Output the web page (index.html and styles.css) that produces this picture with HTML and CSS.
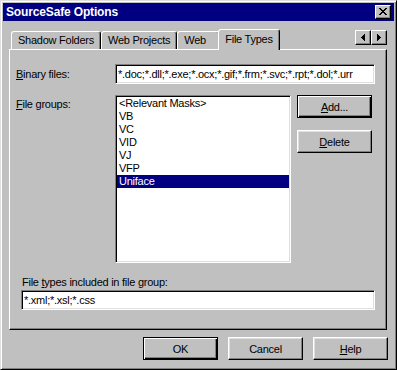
FILE: index.html
```html
<!DOCTYPE html>
<html lang="en">
<head>
    <meta charset="UTF-8">
    <title>SourceSafe Options</title>
    <link rel="stylesheet" href="styles.css">
</head>
<body>
    <div class="window">
        <div class="titlebar">
            <span class="title">SourceSafe Options</span>
            <span class="close-btn">
                <svg width="8" height="7" viewBox="0 0 8 7" shape-rendering="crispEdges">
                    <path d="M0 0h2v1h-2z M6 0h2v1h-2z M1 1h2v1h-2z M5 1h2v1h-2z M2 2h4v1h-4z M3 3h2v1h-2z M2 4h4v1h-4z M1 5h2v1h-2z M5 5h2v1h-2z M0 6h2v1h-2z M6 6h2v1h-2z" fill="#000"/>
                </svg>
            </span>
        </div>

        <div class="dialog">
            <div class="tabs">
                <div class="tab">Shadow Folders</div>
                <div class="tab">Web Projects</div>
                <div class="tab web">Web</div>
                <div class="tab active">File Types</div>
                <div class="tab-scroll">
                    <span class="arrow-btn">
                        <svg width="4" height="7" viewBox="0 0 4 7" shape-rendering="crispEdges">
                            <path d="M3 0h1v7h-1z M2 1h1v5h-1z M1 2h1v3h-1z M0 3h1v1h-1z" fill="#000"/>
                        </svg>
                    </span>
                    <span class="arrow-btn">
                        <svg width="4" height="7" viewBox="0 0 4 7" shape-rendering="crispEdges">
                            <path d="M0 0h1v7h-1z M1 1h1v5h-1z M2 2h1v3h-1z M3 3h1v1h-1z" fill="#000"/>
                        </svg>
                    </span>
                </div>
            </div>

            <div class="panel">
                <div class="field-row">
                    <label><u>B</u>inary files:</label>
                    <div class="textbox">*.doc;*.dll;*.exe;*.ocx;*.gif;*.frm;*.svc;*.rpt;*.dol;*.urr</div>
                </div>

                <div class="groups-row">
                    <label class="groups-label"><u>F</u>ile groups:</label>
                    <ul class="listbox">
                        <li>&lt;Relevant Masks&gt;</li>
                        <li>VB</li>
                        <li>VC</li>
                        <li>VID</li>
                        <li>VJ</li>
                        <li>VFP</li>
                        <li class="selected">Uniface</li>
                    </ul>
                    <div class="side-buttons">
                        <button class="btn default"><u>A</u>dd...</button>
                        <button class="btn"><u>D</u>elete</button>
                    </div>
                </div>

                <div class="types">
                    <label>File <u>t</u>ypes included in file group:</label>
                    <div class="textbox">*.xml;*.xsl;*.css</div>
                </div>
            </div>

            <div class="actions">
                <button class="btn default">OK</button>
                <button class="btn">Cancel</button>
                <button class="btn"><u>H</u>elp</button>
            </div>
        </div>
    </div>
</body>
</html>
```

FILE: styles.css
```css
:root {
    --face: #c0c0c0;
    --shadow: #808080;
    --light: #dfdfdf;
    --navy: #000080;
}

* {
    box-sizing: border-box;
    margin: 0;
    padding: 0;
}

body {
    font-family: 'Liberation Sans', Arial, sans-serif;
    font-size: 11px;
    letter-spacing: -0.25px;
    color: #000;
    background: var(--face);
}

.window {
    width: 397px;
    height: 370px;
    background: var(--face);
    border: 1px solid;
    border-color: var(--light) #000 #000 var(--light);
    box-shadow: inset 1px 1px 0 #fff, inset -1px -1px 0 var(--shadow);
    padding: 2px;
}

/* title bar */
.titlebar {
    height: 18px;
    background: var(--navy);
    display: flex;
    align-items: center;
    justify-content: space-between;
    padding: 0 3px 0 3px;
}

.title {
    color: #fff;
    font-weight: bold;
    font-size: 12px;
    letter-spacing: -0.15px;
}

.close-btn {
    width: 16px;
    height: 14px;
    background: var(--face);
    border: 1px solid;
    border-color: #fff #000 #000 #fff;
    box-shadow: inset -1px -1px 0 var(--shadow);
    display: flex;
    align-items: center;
    justify-content: center;
    padding: 0 1px 1px 0;
}

/* dialog body */
.dialog {
    padding: 8px 7px 0 6px;
}

.tabs {
    display: flex;
    align-items: flex-end;
    height: 20px;
    padding-left: 2px;
}

.tab {
    height: 18px;
    padding: 0 6px;
    border: 1px solid;
    border-bottom: none;
    border-color: #fff #000 transparent #fff;
    border-radius: 3px 3px 0 0;
    box-shadow: inset -1px 0 0 var(--shadow);
    line-height: 16px;
    white-space: nowrap;
}

.tab.web {
    min-width: 43px;
}

.tab.active {
    height: 21px;
    margin: 0 -2px -1px;
    padding: 1px 6px 0;
    position: relative;
    z-index: 1;
    background: var(--face);
}

.tab-scroll {
    margin-left: auto;
    align-self: flex-start;
    margin-top: 1px;
    display: flex;
}

.arrow-btn {
    width: 16px;
    height: 15px;
    background: var(--face);
    border: 1px solid;
    border-color: #fff #000 #000 #fff;
    box-shadow: inset -1px -1px 0 var(--shadow);
    display: flex;
    align-items: center;
    justify-content: center;
}

.panel {
    height: 281px;
    border: 1px solid;
    border-color: #fff #000 #000 #fff;
    box-shadow: inset -1px -1px 0 var(--shadow);
    padding: 14px 11px 0 6px;
}

label u,
.btn u {
    text-decoration: underline;
    text-underline-offset: 1px;
}

.field-row {
    display: grid;
    grid-template-columns: 99px 1fr;
    align-items: center;
}

.textbox {
    height: 20px;
    background: #fff;
    border: 1px solid;
    border-color: var(--shadow) #fff #fff var(--shadow);
    box-shadow: inset 1px 1px 0 #000, inset -1px -1px 0 var(--light);
    padding: 0 2px;
    line-height: 18px;
    white-space: nowrap;
    overflow: hidden;
}

.groups-row {
    margin-top: 11px;
    display: grid;
    grid-template-columns: 93px 176px 75px;
    column-gap: 6px;
    align-items: start;
}

.groups-label {
    margin-top: 3px;
}

.listbox {
    list-style: none;
    height: 168px;
    background: #fff;
    border: 1px solid;
    border-color: var(--shadow) #fff #fff var(--shadow);
    box-shadow: inset 1px 1px 0 #000, inset -1px -1px 0 var(--light);
    padding: 1px 1px 0 1px;
}

.listbox li {
    height: 13px;
    line-height: 13px;
    padding-left: 2px;
    white-space: nowrap;
}

.listbox li.selected {
    background: var(--navy);
    color: #fff;
}

.side-buttons {
    display: flex;
    flex-direction: column;
    gap: 12px;
}

.btn {
    width: 75px;
    height: 23px;
    background: var(--face);
    border: 1px solid;
    border-color: #fff #000 #000 #fff;
    box-shadow: inset -1px -1px 0 var(--shadow), inset 1px 1px 0 var(--light);
    font: inherit;
    letter-spacing: inherit;
    color: #000;
    padding: 0;
}

.btn.default {
    border-color: #000;
    box-shadow: inset 1px 1px 0 #fff, inset -1px -1px 0 #000, inset -2px -2px 0 var(--shadow);
}

.types {
    margin-top: 13px;
    padding-left: 5px;
}

.types label {
    display: block;
    height: 14px;
    line-height: 13px;
    margin-left: 1px;
}

.actions {
    margin-top: 7px;
    margin-right: -1px;
    display: flex;
    justify-content: flex-end;
    gap: 10px;
}
```
